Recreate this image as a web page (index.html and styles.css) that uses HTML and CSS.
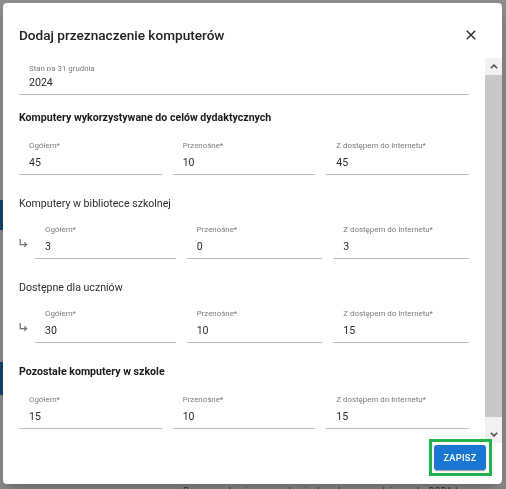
FILE: index.html
```html
<!DOCTYPE html>
<html lang="pl">
<head>
<meta charset="utf-8">
<title>Dodaj przeznaczenie komputerów</title>
<link rel="stylesheet" href="styles.css">
</head>
<body>
<div class="page">
  <nav class="page-nav">
    <div class="nav-item"></div>
    <div class="nav-item nav-item--tall"></div>
  </nav>
  <main class="page-main">
    <p class="page-note">Przeprowadzenie wprowadzenia danych z poprzedniego roku DODAJ</p>
  </main>
</div>
<div class="backdrop"></div>
<div class="dialog" role="dialog">
  <header class="dialog-header">
    <h2 class="dialog-title">Dodaj przeznaczenie komputerów</h2>
    <button class="close" aria-label="Zamknij">
      <svg width="10" height="10" viewBox="0 0 10 10"><path d="M0.8 0.8 L9.2 9.2 M9.2 0.8 L0.8 9.2" stroke="#333" stroke-width="1.5" fill="none"/></svg>
    </button>
  </header>
  <div class="dialog-body">
    <div class="scroll-content">
      <div class="field field--year">
        <span class="field-label">Stan na 31 grudnia</span>
        <span class="field-value">2024</span>
      </div>

      <section class="section">
        <h3 class="section-title section-title--bold">Komputery wykorzystywane do celów dydaktycznych</h3>
        <div class="field-row">
          <div class="field"><span class="field-label">Ogółem*</span><span class="field-value">45</span></div>
          <div class="field"><span class="field-label">Przenośne*</span><span class="field-value">10</span></div>
          <div class="field"><span class="field-label">Z dostępem do Internetu*</span><span class="field-value">45</span></div>
        </div>
      </section>

      <section class="section">
        <h3 class="section-title">Komputery w bibliotece szkolnej</h3>
        <div class="sub-row">
          <span class="sub-arrow"><svg width="9" height="9" viewBox="0 0 9 9"><path d="M1.2 0 V5.6 H7.6 M5.3 3.3 L7.6 5.6 L5.3 7.9" stroke="#6b6b6b" stroke-width="1.2" fill="none"/></svg></span>
          <div class="field-row field-row--sub">
            <div class="field"><span class="field-label">Ogółem*</span><span class="field-value">3</span></div>
            <div class="field"><span class="field-label">Przenośne*</span><span class="field-value">0</span></div>
            <div class="field"><span class="field-label">Z dostępem do Internetu*</span><span class="field-value">3</span></div>
          </div>
        </div>
      </section>

      <section class="section">
        <h3 class="section-title">Dostępne dla uczniów</h3>
        <div class="sub-row">
          <span class="sub-arrow"><svg width="9" height="9" viewBox="0 0 9 9"><path d="M1.2 0 V5.6 H7.6 M5.3 3.3 L7.6 5.6 L5.3 7.9" stroke="#6b6b6b" stroke-width="1.2" fill="none"/></svg></span>
          <div class="field-row field-row--sub">
            <div class="field"><span class="field-label">Ogółem*</span><span class="field-value">30</span></div>
            <div class="field"><span class="field-label">Przenośne*</span><span class="field-value">10</span></div>
            <div class="field"><span class="field-label">Z dostępem do Internetu*</span><span class="field-value">15</span></div>
          </div>
        </div>
      </section>

      <section class="section">
        <h3 class="section-title section-title--bold">Pozostałe komputery w szkole</h3>
        <div class="field-row">
          <div class="field"><span class="field-label">Ogółem*</span><span class="field-value">15</span></div>
          <div class="field"><span class="field-label">Przenośne*</span><span class="field-value">10</span></div>
          <div class="field"><span class="field-label">Z dostępem do Internetu*</span><span class="field-value">15</span></div>
        </div>
      </section>
    </div>
    <div class="scrollbar">
      <div class="sb-btn"><svg width="8" height="5" viewBox="0 0 8 5"><path d="M0.8 4.3 L4 1.1 L7.2 4.3" stroke="#505050" stroke-width="1.6" fill="none"/></svg></div>
      <div class="sb-thumb"></div>
      <div class="sb-track"></div>
      <div class="sb-btn"><svg width="8" height="5" viewBox="0 0 8 5"><path d="M0.8 0.7 L4 3.9 L7.2 0.7" stroke="#505050" stroke-width="1.6" fill="none"/></svg></div>
    </div>
  </div>
  <footer class="dialog-actions">
    <div class="save-wrap">
      <button class="btn-save">Zapisz</button>
      <span class="highlight"></span>
    </div>
  </footer>
</div>
</body>
</html>
```
FILE: styles.css
```css
html, body {
  margin: 0;
  padding: 0;
}
body {
  width: 506px;
  height: 489px;
  overflow: hidden;
  background: #ffffff;
  font-family: Roboto, "Noto Sans", "Liberation Sans", sans-serif;
}

/* background page */
.page {
  display: flex;
  height: 489px;
  overflow: hidden;
}
.page-nav {
  width: 60px;
  flex: none;
  padding-top: 200px;
  display: flex;
  flex-direction: column;
  gap: 132px;
}
.nav-item {
  height: 30px;
  background: #2f78c8;
}
.nav-item--tall {
  height: 33px;
}
.page-main {
  flex: 1;
  display: flex;
  flex-direction: column;
  justify-content: flex-end;
  padding-left: 123px;
}
.page-note {
  margin: 0 0 -8px;
  font-size: 9px;
  line-height: 11px;
  color: #555;
  white-space: nowrap;
}

.backdrop {
  position: fixed;
  inset: 0;
  background: rgba(0, 0, 0, 0.45);
}

/* dialog */
.dialog {
  position: fixed;
  left: 3px;
  top: 3px;
  width: 499px;
  height: 481px;
  background: #fff;
  border-radius: 4px;
  display: flex;
  flex-direction: column;
  box-shadow: 0 6px 10px -4px rgba(0,0,0,.2), 0 12px 20px 2px rgba(0,0,0,.12);
}
.dialog-header {
  height: 55px;
  box-sizing: border-box;
  display: flex;
  align-items: center;
  justify-content: space-between;
  padding: 21px 26px 12px 16px;
  flex: none;
}
.dialog-title {
  margin: 0;
  font-size: 13.6px;
  line-height: 22px;
  font-weight: 500;
  color: #212121;
}
.close {
  width: 10px;
  height: 10px;
  padding: 0;
  border: 0;
  background: none;
  display: flex;
}

.dialog-body {
  flex: 1;
  min-height: 0;
  display: flex;
}
.scroll-content {
  flex: 1;
  overflow: hidden;
  padding: 5.5px 16px 0 16px;
}

/* fields */
.field {
  display: flex;
  flex-direction: column;
  padding: 0 10px 4.5px;
  border-bottom: 1px solid #b9b9b9;
  min-width: 0;
}
.field-label {
  font-size: 7.9px;
  line-height: 10px;
  color: #7a7a7a;
  white-space: nowrap;
}
.field-value {
  font-size: 10.6px;
  line-height: 15px;
  color: #2b2b2b;
  margin-top: 3.5px;
}
.field--year .field-value {
  margin-top: 1px;
}

.section {
  margin-top: 21px;
}
.field--year + .section {
  margin-top: 15px;
}
.section-title {
  margin: 0 0 14px;
  font-size: 10.6px;
  line-height: 15px;
  font-weight: 400;
  color: #2b2b2b;
}
.section-title--bold {
  font-weight: 700;
  color: #1a1a1a;
  margin-bottom: 16px;
}

.field-row {
  display: grid;
  grid-template-columns: repeat(3, 1fr);
  column-gap: 11px;
}
.sub-row {
  display: flex;
  margin-bottom: 2px;
}
.sub-arrow {
  width: 16px;
  flex: none;
  padding-top: 14px;
  display: flex;
  align-items: flex-start;
}
.field-row--sub {
  flex: 1;
  grid-template-columns: 141fr 136fr 136fr;
}

/* scrollbar */
.scrollbar {
  width: 17px;
  flex: none;
  display: flex;
  flex-direction: column;
  background: #f1f1f1;
}
.sb-btn {
  height: 17px;
  flex: none;
  display: flex;
  align-items: center;
  justify-content: center;
}
.sb-thumb {
  height: 342px;
  flex: none;
  background: #c8c8c8;
}
.sb-track {
  flex: 1;
}

/* actions */
.dialog-actions {
  height: 41px;
  box-sizing: border-box;
  flex: none;
  display: flex;
  justify-content: flex-end;
  align-items: flex-start;
  padding: 2px 16px 14px;
}
.save-wrap {
  position: relative;
  display: flex;
}
.btn-save {
  width: 52px;
  height: 25px;
  padding: 0;
  border: 0;
  border-radius: 3px;
  background: #1976d2;
  color: #fff;
  font-family: Roboto, "Noto Sans", sans-serif;
  font-size: 9.2px;
  font-weight: 500;
  letter-spacing: 0.3px;
  text-transform: uppercase;
  box-shadow: 0 2px 1px -1px rgba(0,0,0,.2), 0 1px 1px 0 rgba(0,0,0,.14), 0 1px 3px 0 rgba(0,0,0,.12);
}
.highlight {
  position: absolute;
  left: -5px;
  top: -6px;
  right: -6px;
  bottom: -6px;
  border: 3px solid #22b14c;
  pointer-events: none;
}
```
